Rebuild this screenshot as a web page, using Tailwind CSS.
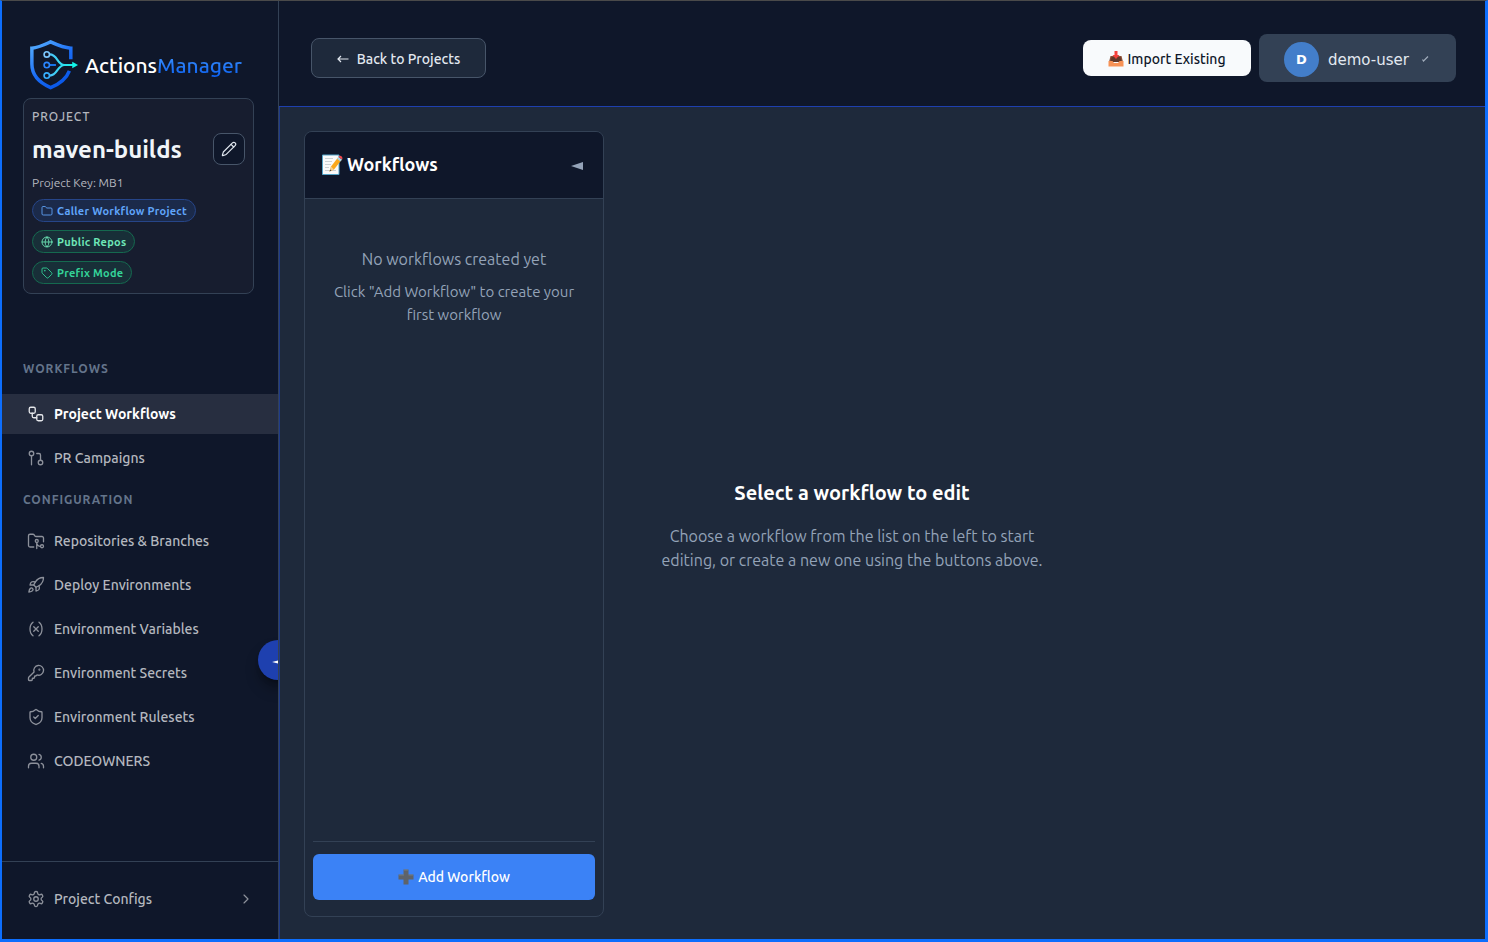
<!DOCTYPE html>
<html lang="en">
<head>
  <meta charset="UTF-8" />
  <meta name="viewport" content="width=device-width, initial-scale=1.0">
  <title>Actions Manager – maven-builds</title>
  <script src="https://cdn.jsdelivr.net/npm/@tailwindcss/browser@4"></script>
</head>
<body class="font-['Ubuntu','Noto_Sans',sans-serif] text-white bg-[#1e293b]">

  <div class="h-screen flex border-t border-t-[#4a4a4a] border-l-2 border-l-[#0d6efd] border-r-3 border-r-[#0d6efd] border-b-3 border-b-[#0d6efd] overflow-hidden">

    <!-- Sidebar -->
    <aside class="relative w-[277px] shrink-0 flex flex-col bg-[#0f172a] border-r border-[#334155] overflow-hidden">

      <!-- Logo -->
      <a href="#" class="flex items-center h-[97px] pl-[27px] pt-[30px] gap-[6px]" aria-label="ActionsManager">
        <svg class="size-[50px] shrink-0" viewBox="0 0 52 52" fill="none">
          <defs>
            <linearGradient id="shield" x1="0" y1="0" x2="0.6" y2="1">
              <stop offset="0" stop-color="#58b0ff" />
              <stop offset="0.6" stop-color="#1a6cf5" />
              <stop offset="1" stop-color="#0a58e8" />
            </linearGradient>
            <linearGradient id="flow" gradientUnits="userSpaceOnUse" x1="15" y1="0" x2="48" y2="0">
              <stop offset="0" stop-color="#5ab8ff" />
              <stop offset="1" stop-color="#12f5e6" />
            </linearGradient>
          </defs>
          <path d="M43.500 20V8.500C35 8 29 5 22.500 2C16 5 10 8 3 8.500V25C3 37 12 45 22.500 49.500C32 45.500 39 40 42 32" stroke="url(#shield)" stroke-width="3.600" />
          <path d="M21.500 15C30 15 29 26 37 26M21.500 37C30 37 29 26 37 26H46" stroke="url(#flow)" stroke-width="2.200" />
          <path d="M21.500 26H28" stroke="#1a78f0" stroke-width="2" />
          <path d="M45 22.500L51 26L45 29.500Z" fill="#12f5e6" />
          <circle cx="18.500" cy="15" r="2.800" stroke="#7cc8ff" stroke-width="1.700" />
          <circle cx="18.500" cy="26" r="2.800" stroke="#2a86ff" stroke-width="1.700" />
          <circle cx="18.500" cy="37" r="2.800" stroke="#38b0ff" stroke-width="1.700" />
        </svg>
        <span class="text-[21px] font-medium leading-7 whitespace-nowrap">Actions<span class="bg-gradient-to-b from-[#4096ff] to-[#0a5ff0] bg-clip-text text-transparent">Manager</span></span>
      </a>

      <!-- Project card -->
      <section class="ml-[21px] mr-6 h-[196px] px-2 pt-[9px] flex flex-col items-start rounded-lg border border-[#334155] bg-[#171d2f]">
        <p class="text-xs leading-[18px] font-medium tracking-[0.08em] text-[#b4b7bf]">PROJECT</p>
        <div class="mt-[7px] w-full h-8 flex items-center justify-between">
          <h1 class="pt-0.5 text-2xl leading-8 font-bold text-[#f1f5f9]">maven-builds</h1>
          <button aria-label="Edit project" class="size-8 flex items-center justify-center rounded-lg border border-[#475569] bg-[#0f172a] text-[#e2e8f0]">
            <svg class="size-4" viewBox="0 0 24 24" fill="none" stroke="currentColor" stroke-width="1.750" stroke-linecap="round" stroke-linejoin="round"><path d="M21.174 6.812a1 1 0 0 0-3.986-3.987L3.842 16.174a2 2 0 0 0-.5.830l-1.321 4.352a.5.5 0 0 0 .623.622l4.353-1.320a2 2 0 0 0 .830-.497z" /><path d="m15 5 4 4" /></svg>
          </button>
        </div>
        <p class="mt-[10px] text-xs leading-4 text-[#b4b7bf]">Project Key: MB1</p>
        <div class="mt-2 flex flex-col items-start gap-2 text-[11px] leading-4 font-bold tracking-wide">
          <span class="flex items-center gap-1 h-[23px] px-2 rounded-full border border-[#264588] bg-[#1b2a4a] text-[#60a5fa]">
            <svg class="size-3" viewBox="0 0 24 24" fill="none" stroke="currentColor" stroke-width="1.750" stroke-linecap="round" stroke-linejoin="round"><path d="M20 20a2 2 0 0 0 2-2V8a2 2 0 0 0-2-2h-7.900a2 2 0 0 1-1.690-.900L9.600 3.900A2 2 0 0 0 7.930 3H4a2 2 0 0 0-2 2v13a2 2 0 0 0 2 2Z" /></svg>
            Caller Workflow Project
          </span>
          <span class="flex items-center gap-1 h-[23px] px-2 rounded-full border border-[#15694f] bg-[#182f38] text-[#6ee7b7]">
            <svg class="size-3" viewBox="0 0 24 24" fill="none" stroke="currentColor" stroke-width="1.750" stroke-linecap="round"><circle cx="12" cy="12" r="10" /><path d="M12 2a14.500 14.500 0 0 0 0 20 14.500 14.500 0 0 0 0-20M2 12h20" /></svg>
            Public Repos
          </span>
          <span class="flex items-center gap-1 h-[23px] px-2 rounded-full border border-[#15694f] bg-[#182f38] text-[#34d399]">
            <svg class="size-3" viewBox="0 0 24 24" fill="none" stroke="currentColor" stroke-width="1.750" stroke-linecap="round" stroke-linejoin="round"><path d="M12.586 2.586A2 2 0 0 0 11.172 2H4a2 2 0 0 0-2 2v7.172a2 2 0 0 0 .586 1.414l8.704 8.704a2.426 2.426 0 0 0 3.420 0l6.580-6.580a2.426 2.426 0 0 0 0-3.420z" /><circle cx="7.500" cy="7.500" r=".5" fill="currentColor" /></svg>
            Prefix Mode
          </span>
        </div>
      </section>

      <!-- Navigation -->
      <nav class="flex-1 pt-[66px] text-sm font-medium text-[#b4b7bf]">
        <h2 class="pl-[21px] text-xs leading-[18px] font-bold tracking-[0.08em] text-[#64748b]">WORKFLOWS</h2>
        <a href="#" class="mt-4 h-10 pl-[25px] flex items-center gap-[9px] bg-[#272e40] text-white font-bold">
          <svg class="size-[18px] text-[#e4e6ea]" viewBox="0 0 24 24" fill="none" stroke="currentColor" stroke-width="1.750" stroke-linecap="round" stroke-linejoin="round"><rect width="8" height="8" x="3" y="3" rx="2" /><path d="M7 11v4a2 2 0 0 0 2 2h4" /><rect width="8" height="8" x="13" y="13" rx="2" /></svg>
          Project Workflows
        </a>
        <a href="#" class="mt-1 h-10 pl-[25px] flex items-center gap-[9px]">
          <svg class="size-[18px] text-[#8d919b]" viewBox="0 0 24 24" fill="none" stroke="currentColor" stroke-width="1.750" stroke-linecap="round" stroke-linejoin="round"><circle cx="18" cy="18" r="3" /><circle cx="6" cy="6" r="3" /><path d="M13 6h3a2 2 0 0 1 2 2v7M6 9v12" /></svg>
          PR Campaigns
        </a>
        <h2 class="mt-[13px] pl-[21px] text-xs leading-[18px] font-bold tracking-[0.08em] text-[#64748b]">CONFIGURATION</h2>
        <div class="mt-3 flex flex-col gap-1">
          <a href="#" class="h-10 pl-[25px] flex items-center gap-[9px]">
            <svg class="size-[18px] text-[#8d919b]" viewBox="0 0 24 24" fill="none" stroke="currentColor" stroke-width="1.750" stroke-linecap="round" stroke-linejoin="round"><path d="M9 20H4a2 2 0 0 1-2-2V5a2 2 0 0 1 2-2h3.900a2 2 0 0 1 1.690.900l.810 1.200a2 2 0 0 0 1.670.900H20a2 2 0 0 1 2 2v5" /><circle cx="13" cy="12" r="2" /><path d="M18 19c-2.800 0-5-2.200-5-5v8" /><circle cx="20" cy="19" r="2" /></svg>
            Repositories &amp; Branches
          </a>
          <a href="#" class="h-10 pl-[25px] flex items-center gap-[9px]">
            <svg class="size-[18px] text-[#8d919b]" viewBox="0 0 24 24" fill="none" stroke="currentColor" stroke-width="1.750" stroke-linecap="round" stroke-linejoin="round"><path d="M4.500 16.500c-1.500 1.260-2 5-2 5s3.740-.5 5-2c.710-.840.700-2.130-.090-2.910a2.180 2.180 0 0 0-2.910-.090z" /><path d="m12 15-3-3a22 22 0 0 1 2-3.950A12.880 12.880 0 0 1 22 2c0 2.720-.780 7.500-6 11a22.350 22.350 0 0 1-4 2z" /><path d="M9 12H4s.550-3.030 2-4c1.620-1.080 5 0 5 0" /><path d="M12 15v5s3.030-.550 4-2c1.080-1.620 0-5 0-5" /></svg>
            Deploy Environments
          </a>
          <a href="#" class="h-10 pl-[25px] flex items-center gap-[9px]">
            <svg class="size-[18px] text-[#8d919b]" viewBox="0 0 24 24" fill="none" stroke="currentColor" stroke-width="1.750" stroke-linecap="round" stroke-linejoin="round"><path d="M8 21s-4-3-4-9 4-9 4-9M16 3s4 3 4 9-4 9-4 9M15 9l-6 6M9 9l6 6" /></svg>
            Environment Variables
          </a>
          <a href="#" class="h-10 pl-[25px] flex items-center gap-[9px]">
            <svg class="size-[18px] text-[#8d919b]" viewBox="0 0 24 24" fill="none" stroke="currentColor" stroke-width="1.750" stroke-linecap="round" stroke-linejoin="round"><path d="M2.586 17.414A2 2 0 0 0 2 18.828V21a1 1 0 0 0 1 1h3a1 1 0 0 0 1-1v-1a1 1 0 0 1 1-1h1a1 1 0 0 0 1-1v-1a1 1 0 0 1 1-1h.172a2 2 0 0 0 1.414-.586l.814-.814a6.500 6.500 0 1 0-4-4z" /><circle cx="16.500" cy="7.500" r=".5" fill="currentColor" /></svg>
            Environment Secrets
          </a>
          <a href="#" class="h-10 pl-[25px] flex items-center gap-[9px]">
            <svg class="size-[18px] text-[#8d919b]" viewBox="0 0 24 24" fill="none" stroke="currentColor" stroke-width="1.750" stroke-linecap="round" stroke-linejoin="round"><path d="M20 13c0 5-3.500 7.500-7.660 8.950a1 1 0 0 1-.670-.010C7.500 20.500 4 18 4 13V6a1 1 0 0 1 1-1c2 0 4.500-1.200 6.240-2.720a1.170 1.170 0 0 1 1.520 0C14.510 3.810 17 5 19 5a1 1 0 0 1 1 1z" /><path d="m9 12 2 2 4-4" /></svg>
            Environment Rulesets
          </a>
          <a href="#" class="h-10 pl-[25px] flex items-center gap-[9px]">
            <svg class="size-[18px] text-[#8d919b]" viewBox="0 0 24 24" fill="none" stroke="currentColor" stroke-width="1.750" stroke-linecap="round" stroke-linejoin="round"><path d="M16 21v-2a4 4 0 0 0-4-4H6a4 4 0 0 0-4 4v2" /><circle cx="9" cy="7" r="4" /><path d="M22 21v-2a4 4 0 0 0-3-3.870M16 3.130a4 4 0 0 1 0 7.750" /></svg>
            CODEOWNERS
          </a>
        </div>
      </nav>

      <!-- Sidebar footer -->
      <div class="h-[78px] border-t border-[#334155] pl-[25px] pr-6 pb-1 flex items-center text-sm font-medium text-[#b4b7bf]">
        <a href="#" class="flex-1 flex items-center gap-[9px]">
          <svg class="size-[18px] text-[#8d919b]" viewBox="0 0 24 24" fill="none" stroke="currentColor" stroke-width="1.750" stroke-linecap="round" stroke-linejoin="round"><path d="M12.220 2h-.440a2 2 0 0 0-2 2v.180a2 2 0 0 1-1 1.730l-.430.250a2 2 0 0 1-2 0l-.150-.080a2 2 0 0 0-2.730.730l-.220.380a2 2 0 0 0 .730 2.730l.150.100a2 2 0 0 1 1 1.720v.510a2 2 0 0 1-1 1.740l-.150.090a2 2 0 0 0-.730 2.730l.220.380a2 2 0 0 0 2.730.730l.150-.080a2 2 0 0 1 2 0l.430.250a2 2 0 0 1 1 1.730V20a2 2 0 0 0 2 2h.440a2 2 0 0 0 2-2v-.180a2 2 0 0 1 1-1.730l.430-.250a2 2 0 0 1 2 0l.150.080a2 2 0 0 0 2.730-.730l.220-.390a2 2 0 0 0-.730-2.730l-.150-.080a2 2 0 0 1-1-1.740v-.5a2 2 0 0 1 1-1.740l.150-.090a2 2 0 0 0 .730-2.730l-.220-.380a2 2 0 0 0-2.730-.730l-.150.080a2 2 0 0 1-2 0l-.430-.250a2 2 0 0 1-1-1.730V4a2 2 0 0 0-2-2z" /><circle cx="12" cy="12" r="3" /></svg>
          <span class="flex-1">Project Configs</span>
          <svg class="size-4 text-[#8d919b]" viewBox="0 0 24 24" fill="none" stroke="currentColor" stroke-width="1.750" stroke-linecap="round" stroke-linejoin="round"><path d="m9 18 6-6-6-6" /></svg>
        </a>
      </div>

      <!-- Collapse handle, half hidden by the sidebar edge -->
      <button aria-label="Collapse sidebar" class="absolute -right-5 top-[639px] size-10 pt-[3px] rounded-full bg-[#1e40af] shadow-lg shadow-black/40 flex items-center justify-center">
        <svg class="w-3 h-1" viewBox="0 0 12 4" fill="currentColor"><path d="M0 2L12 -1V5Z" /></svg>
      </button>
    </aside>

    <!-- Main area -->
    <div class="flex-1 min-w-0 flex flex-col">
      <header class="h-[106px] shrink-0 pl-8 pr-[29px] pt-[9px] flex items-center justify-between bg-[#0f172a] border-b border-[#1e40af]">
        <button class="h-10 w-[175px] pt-0.5 flex items-center justify-center gap-2 rounded-lg border border-[#475569] bg-[#1e293b] text-sm font-medium text-[#e2e8f0]">
          <svg class="w-3 h-3" viewBox="0 0 12 12" fill="none" stroke="currentColor" stroke-width="1.200"><path d="M11.500 6H1M4 3L1 6L4 9" /></svg>
          Back to Projects
        </button>
        <div class="flex items-center gap-2">
          <button class="h-9 w-[168px] pt-0.5 flex items-center justify-center gap-[3px] rounded-lg bg-[#f8fafc] text-sm font-medium text-[#0f172a]">
            <svg class="w-4 h-4" viewBox="0 0 16 16">
              <path d="M2.500 5H13.500L15 11H1Z" fill="#8b4f35" />
              <path d="M3.500 6H12.500L13.500 11H2.500Z" fill="#633a2b" />
              <path d="M0.500 10H4.500L6 12H10L11.500 10H15.500V15.500H0.500Z" fill="#f79256" />
              <path d="M6.500 0H9.500V4H11.500L8 8L4.500 4H6.500Z" fill="#f5413b" />
            </svg>
            Import Existing
          </button>
          <button class="h-12 w-[197px] pt-0.5 pl-[25px] flex items-center rounded-lg bg-[#334155] font-['DejaVu_Sans',sans-serif] text-[15px] text-[#e2e8f0]">
            <span class="size-[35px] pt-0.5 rounded-full bg-[#437eca] flex items-center justify-center text-[13px] font-bold text-white">D</span>
            <span class="ml-[9px] pt-0.5">demo-user</span>
            <svg class="ml-3 size-2" viewBox="0 0 8 8" fill="none" stroke="#a0abba" stroke-width="1.200"><path d="M1.500 4.500L2.500 6L7 1.500" /></svg>
          </button>
        </div>
      </header>

      <main class="flex-1 min-h-0 flex gap-12 border-l border-[#1e3a8a] bg-[#1e293b] pl-6 pt-6 pb-[22px]">

        <!-- Workflow list -->
        <section class="w-[300px] shrink-0 flex flex-col rounded-lg border border-[#334155] overflow-hidden">
          <div class="h-[67px] shrink-0 px-[17px] flex items-center justify-between bg-[#0f172a] border-b border-[#334155]">
            <h2 class="pb-0.5 flex items-center gap-1 text-lg font-bold">
              <svg class="w-[21px] h-[21px]" viewBox="0 0 21 21">
                <path d="M0.500 1H17V20.500H0.500Z" fill="#fafafa" stroke="#54a4c8" />
                <path d="M3 4.500H11M3 7.500H10M3 10.500H9M3 13.500H7M3 16.500H14" stroke="#b8bec3" stroke-width="0.700" />
                <path d="M7.500 17.500L9 12.500L16 3.500L19.500 6L12 15.500Z" fill="#fba81c" />
                <path d="M9 12.500L7.500 17.500L12 15.500Z" fill="#f5cf93" />
                <path d="M7.500 17.500L8.200 15.500L9.500 16.600Z" fill="#444" />
                <path d="M15 4.800L16.500 3L20 5.500L18.500 7.500Z" fill="#a9d4e5" />
                <path d="M16.500 3C17.500 0.500 21.500 2.500 20.200 5.500Z" fill="#f0484e" />
              </svg>
              Workflows
            </h2>
            <button aria-label="Collapse list" class="mr-[3px] pt-0.5 text-[#94a3b8]">
              <svg class="w-3 h-2" viewBox="0 0 12 8" fill="currentColor"><path d="M0 4L12 0V8Z" /></svg>
            </button>
          </div>
          <div class="flex-1 pt-12 px-6 text-center text-[#94a3b8]">
            <p class="text-base leading-6">No workflows created yet</p>
            <p class="mt-[9px] text-[15px] leading-[23px]">Click "Add Workflow" to create your first workflow</p>
          </div>
          <div class="mx-2 mb-4 pt-3 border-t border-[#334155]">
            <button class="w-full h-[46px] flex items-center justify-center gap-1 rounded-md bg-[#3b82f6] text-sm font-medium">
              <svg class="w-4 h-4" viewBox="0 0 16 16"><path d="M5.500 0.500H10.500V5.500H15.500V10.500H10.500V15.500H5.500V10.500H0.500V5.500H5.500Z" fill="#5e6369" /><path d="M6 1H10M1 6H6M10.500 6H15" stroke="#81868b" stroke-width="0.700" /></svg>
              Add Workflow
            </button>
          </div>
        </section>

        <!-- Empty state -->
        <section class="w-[400px] pt-0.5 flex flex-col items-center justify-center text-center">
          <h2 class="text-xl leading-[30px] font-bold">Select a workflow to edit</h2>
          <p class="mt-4 text-base leading-6 text-[#94a3b8]">Choose a workflow from the list on the left to start editing, or create a new one using the buttons above.</p>
        </section>
      </main>
    </div>
  </div>

</body>
</html>
